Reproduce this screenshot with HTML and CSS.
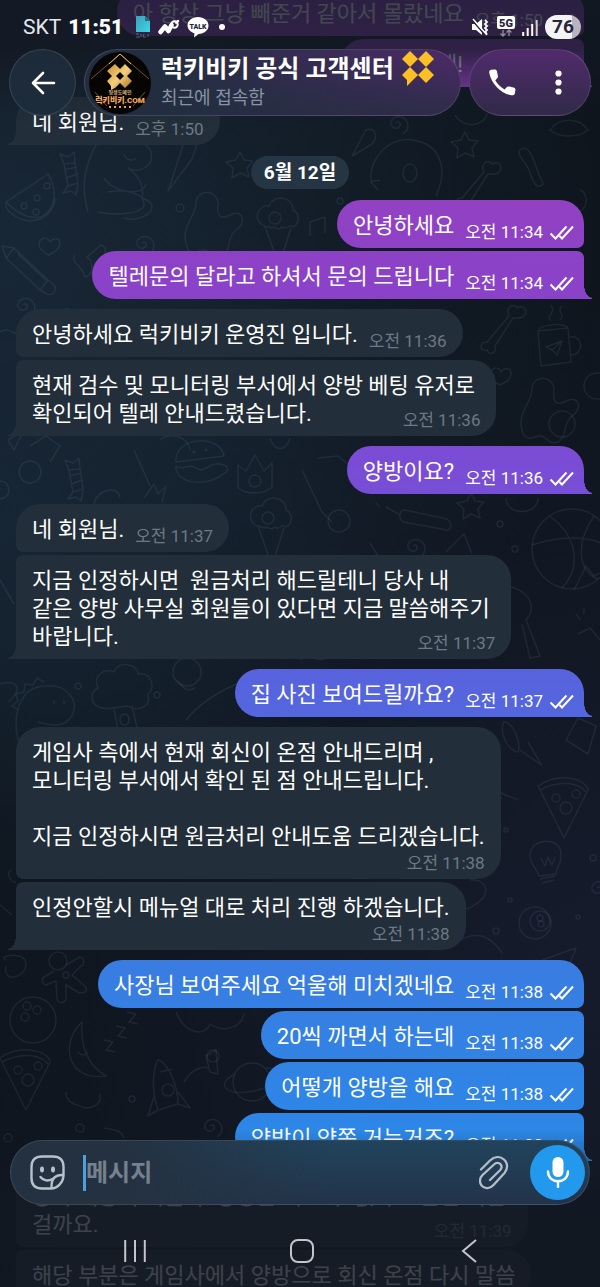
FILE: index.html
```html
<!DOCTYPE html>
<html lang="ko">
<head>
<meta charset="utf-8">
<meta name="viewport" content="width=device-width, initial-scale=1">
<title>럭키비키 공식 고객센터</title>
<link rel="stylesheet" href="styles.css">
</head>
<body>
<div class="screen">
  <svg class="wallpaper" viewBox="0 0 600 1287" preserveAspectRatio="xMidYMin slice" aria-hidden="true">
    <defs>
      <g id="swirl"><path d="M0 0c3-3 6 1 3 4s-9 0-8-5 9-8 14-3 3 12-2 15"/></g>
      <g id="star"><path d="M0-13l4 8 9 1-6 7 2 9-9-4-8 5 1-10-7-6 10-2z"/></g>
      <g id="heart"><path d="M0 9c-8-4-12-9-9-14s9-3 10 1c3-5 10-4 10 1S7 6 0 9z"/></g>
      <g id="melon"><path d="M-26-2L16-30C34 0 10 34-26-2zM-26-2c-1 6 2 9 6 12 20 15 42 3 43-16"/><circle cx="-8" cy="2" r="3"/><circle cx="5" cy="-6" r="3"/><circle cx="4" cy="8" r="3"/><circle cx="15" cy="-18" r="3"/></g>
      <g id="pencil"><path d="M-26-22l12 2 34 32-8 10-34-32zM-14-20l-8 10M20 12l6 5c5 6-4 13-9 8l-5-3M-10-14l30 28"/></g>
      <g id="cone"><path d="M-12 4L2 44 14 6M-16 2c-8-8-1-20 8-18 4-12 24-10 24 4 8 4 6 14 0 17-5-4-6 4-11 0-5 5-6-2-11 1-4-3-6 0-10-4z"/><circle cx="-2" cy="-4" r="6"/></g>
      <g id="ghost"><path d="M-20 28c-10-24 8-30 8-48 2-14 22-12 22 2-2 14 4 16 14 10 12-4 14 10 4 16-10 8-4 20-14 26-10 4-12-8-20-6-6 2-8 4-14 0z"/></g>
      <g id="tree"><path d="M-10 18c-20 4-26-14-14-20-6-14 8-20 16-16 4-12 24-8 24 2 14-2 18 14 10 20 4 14-12 18-20 12zM-8 18l5 28M10 16l6 26M2 24c6 0 7 10 1 11s-7-9-1-11z"/></g>
      <g id="planet"><circle r="19"/><path d="M-17-8C-40 4-22 16 6 8S38-14 14-14"/></g>
      <g id="bulb"><path d="M-7 14c-2-8-10-12-9-22C-14-24 14-26 15-8c1 10-5 12-5 20zM-6 17l15-3M-4 21l12-3M-5-4l4 8 3-9 4 8 3-8"/></g>
      <g id="pizza"><path d="M-28-12c20-14 48-8 50 4L-2 40zM-26-8c18-10 38-8 46 2"/><circle cx="0" cy="10" r="6"/><circle cx="10" cy="-4" r="4"/><circle cx="-10" cy="0" r="4"/></g>
      <g id="man"><circle cx="-6" cy="-14" r="9"/><path d="M2-10l14-8c6 2 4 8 0 10L8 0l14 12c2 6-5 7-8 5L2 10v14c-3 6-9 4-9-1L-8 6l-10 4c-6-2-4-8 0-9l8-5"/><circle cx="2" cy="0" r="3"/></g>
      <g id="rocket"><path d="M-10 24c-8-24-4-44 0-50 10 2 20 26 20 44zM-10 24l-10 6 6-20M10 18l12 4-12-16M-8-14l12-3"/><circle cx="0" cy="4" r="6"/></g>
      <g id="cup"><path d="M-17-16l30-3 3 34-30 4zM-17-16c4-8 28-8 30-3M15-10c14-2 14 18 1 18M-9 0l16-6-5 14-5-5zM7-6L-3 3M-4-26c-6-6 6-8 0-16M5-27c6-6-4-8 2-14"/></g>
      <g id="moon"><path d="M6-30C-16-10-10 30 30 24 16 16 4 0 6-30zM2 0c4 4 7 4 10 0"/></g>
      <g id="burger"><path d="M-24 0c-2-26 44-28 48-6zM-24 4c8 6 12-4 20 2s14-6 24-4 8 6 6 8c-12 12-42 16-50-2z"/><circle cx="-6" cy="-10" r="1"/><circle cx="6" cy="-12" r="1"/></g>
      <g id="crown"><path d="M-17-10l8 6L0-20l9 16 8-8v24c-8 8-28 8-34 0z"/><circle cy="6" r="6"/></g>
      <g id="ball"><circle r="40"/><path d="M-22-33C8-10 8 20-10 39M-40-4C-10-14 20-14 40 0M22-33C0 0 10 24 26 30"/></g>
      <g id="bone"><path d="M-16 14l22-26c-4-8 4-14 8-8 8-4 12 4 6 9-4 2-7 1-10 1L-8 18c2 8-6 10-8 4-8 2-8-8 0-8z"/></g>
      <g id="dino"><path d="M-24 34c-10-30 0-60 26-60 20-2 34 14 26 30-8 12-20 10-34 6M10-12v4M20-12v4M-26-2l-6-4 6-5-2-7 8-2 1-8 8 1 4-7 7 4"/></g>
      <g id="cat"><path d="M-34 30c-10-34 2-52 6-64 8-12 32-14 38-4 20-6 26 18 12 24-6 4-12 2-16 0 14 10 16 20 14 30 24 8 0 26-18 20M-18-4C-8 12 22 14 24 2M-14 10c18-4 36 2 36 12s-28 12-46 8M2-28c2 6 8 8 12 4"/></g>
      <g id="candy"><path d="M-6-8l-4-10 8 3 6-5 1 11M-6-8l11-1 3 20-10 3zM-2 14l-5 7 8-2 5 4 2-11M-6-2l13-3M-4 6l12-4"/></g>
    </defs>
    <g class="doodles">
      <use href="#melon" x="32" y="204"/><use href="#candy" x="70" y="172"/><use href="#cat" x="122" y="182"/><path d="M192 118l-24 73 24-32 12-36"/>
      <use href="#star" x="240" y="165"/><use href="#heart" x="49" y="246"/><use href="#pencil" x="28" y="268"/><use href="#swirl" x="142" y="243"/>
      <path d="M75 255c-6 8 8 10 10 22 10-2 8-16 2-20l14-12c8 2 4 14-4 16"/>
      <use href="#ghost" x="208" y="222"/><use href="#cone" x="277" y="222"/><use href="#swirl" x="23" y="305"/><use href="#swirl" x="396" y="123"/>
      <path d="M62 314c6-14 10 4 18-4 16-2 12 8 22 4M0 332c10-6 14 4 22 2"/>
      <path d="M372 184c-6-20 14-48 40-44 30 4 36 30 24 56M378 190c-12-12-4-8 2-10"/><ellipse cx="410" cy="173" rx="7" ry="9"/><use href="#bone" x="478" y="184"/>
      <path d="M520 150c8-8 14 10 18 22s8 12 2 14-8-10-12-18-12-14-8-18M352 156l14-26c10-4 12 8 6 14z"/><use href="#star" x="465" y="145"/>
      <path d="M310 222v14M325 217v16M310 222l15-5M580 190c6 2 10 14 0 22M455 115c8 14 30 12 32-2M550 130c10-14 30-12 38 0-10 8-28 8-38 0z"/>
      <use href="#cup" x="555" y="347"/><use href="#bone" x="503" y="328"/><use href="#ghost" x="544" y="408"/><use href="#heart" x="500" y="376"/><circle cx="562" cy="424" r="13"/><circle cx="597" cy="386" r="13"/>
      <path d="M8 440l16-10-10 20zM30 446l16-10 14 10-10 16M160 440c10-8 28-4 30 10M270 438c4 14 16 14 20 0"/>
      <circle cx="30" cy="472" r="11"/><use href="#candy" x="75" y="478"/><path d="M134 450l16 36M144 498l10-14 4 10 8-8-4 16"/><use href="#burger" x="200" y="462"/><use href="#crown" x="255" y="475"/><use href="#cone" x="270" y="522"/><circle cx="0" cy="490" r="9"/>
      <path d="M318 458l20-2 22 18M302 470l20 42 10 10M94 504c2-14 24-20 26-6"/><circle cx="339" cy="521" r="11"/><path d="M405 510l42 9c6 4 4 11 0 11l-44-8c-5-4-4-12 2-12zM400 515l-14-8M380 507l-4-4"/><use href="#star" x="471" y="506"/><path d="M506 498c0 18 32 18 32 0M446 552l18-18 8 20M370 543l10 16M0 580l14 24M508 586c20 4 30 20 18 34l14 36-10 2-8-34"/><use href="#swirl" x="413" y="546"/>
      <use href="#ball" x="572" y="549"/><path d="M574 590l12-24 8 10 8-4M578 634l12-6 12 14M576 614l4 6M584 608v6"/>
      <use href="#dino" x="44" y="712"/><use href="#tree" x="122" y="690"/><circle cx="187" cy="672" r="14"/><path d="M177 680c6 4 6 14 18 8M0 684c20-6 22 8 8 18M186 720c16-20 44-36 70-42M300 660c10-10 20 8 30-6"/>
      <path d="M504 722c10 0 18 24 14 30-8 0-20-18-14-30zM566 740l12-22 18 8-8 28zM520 750l20 14"/>
      <use href="#pizza" x="566" y="798"/><use href="#bulb" x="546" y="862"/><use href="#swirl" x="597" y="888"/><circle cx="535" cy="923" r="16"/><circle cx="540" cy="921" r="10"/><circle cx="540" cy="918" r="3"/><circle cx="541" cy="924" r="3"/><path d="M528 742l14 24M498 790c8 8 14 6 20 10M470 880c18-2 26 18-6 30"/>
      <path d="M6 960c-10-4 20-10 20 4s-24 20-20 2M12 870c-8 2 0 14 4 12M0 905l12 10M450 945c20-12 36-16 52 8M542 960l34-12-8 20"/>
      <use href="#man" x="64" y="975"/><circle cx="33" cy="1020" r="23"/><circle cx="27" cy="1006" r="4"/><circle cx="37" cy="1010" r="4"/><circle cx="25" cy="1017" r="4"/>
      <use href="#moon" x="76" y="1052"/><path d="M104 1040l9 2-7 8 9 2M116 1026l9 2-7 8 9 2M127 1012l9 2-7 8 9 2M176 1012c10 24 30 24 34 12 12 8 30 6 34-10"/>
      <use href="#pizza" x="28" y="1070"/><use href="#rocket" x="168" y="1086"/><path d="M184 1082c8-14 20-16 24-14M206 1056l10-6 2 24-8-2z"/><circle cx="213" cy="1056" r="6"/><use href="#planet" x="252" y="1082"/>
      <path d="M66 1092c0 14 14 12 18 16 14 0 18-8 16-14M104 1128c6 2 16 0 20 10"/><use href="#swirl" x="210" y="1126"/><circle cx="8" cy="1138" r="4"/><circle cx="80" cy="1128" r="4"/><circle cx="132" cy="1099" r="3"/><circle cx="180" cy="208" r="4"/><circle cx="340" cy="201" r="3"/><circle cx="500" cy="524" r="3"/><circle cx="515" cy="549" r="3"/><circle cx="78" cy="686" r="3"/><circle cx="157" cy="695" r="3"/><circle cx="506" cy="830" r="2"/><circle cx="593" cy="858" r="3"/><circle cx="510" cy="900" r="2"/><circle cx="578" cy="917" r="2"/><circle cx="496" cy="931" r="3"/>
    </g>
  </svg>

  <svg class="defs" aria-hidden="true"><symbol id="ticks" viewBox="0 0 25 15"><path d="M1.500 8.500l5 5L17.500 1.500M10.500 11l2.500 2.500L24 1.500" fill="none" stroke="currentColor" stroke-width="2"/></symbol></svg>

  <main class="chat">
    <section class="group">
      <article class="msg out first"><p>아 항상 그냥 빼준거 같아서 몰랐네요</p><footer><time>오후 1:50</time><svg class="ticks"><use href="#ticks"/></svg></footer></article>
      <article class="msg out last peek"><p>네!</p></article>
    </section>
    <section class="group">
      <article class="msg in single"><p>네 회원님.</p><footer><time>오후 1:50</time></footer></article>
    </section>
    <h2 class="date">6월 12일</h2>
    <section class="group">
      <article class="msg out first"><p>안녕하세요</p><footer><time>오전 11:34</time><svg class="ticks"><use href="#ticks"/></svg></footer></article>
      <article class="msg out last"><p>텔레문의 달라고 하셔서 문의 드립니다</p><footer><time>오전 11:34</time><svg class="ticks"><use href="#ticks"/></svg></footer></article>
    </section>
    <section class="group">
      <article class="msg in first"><p>안녕하세요 럭키비키 운영진 입니다.</p><footer><time>오전 11:36</time></footer></article>
      <article class="msg in last inset"><p>현재 검수 및 모니터링 부서에서 양방 베팅 유저로 <br>확인되어 텔레 안내드렸습니다.</p><footer><time>오전 11:36</time></footer></article>
    </section>
    <section class="group">
      <article class="msg out single"><p>양방이요?</p><footer><time>오전 11:36</time><svg class="ticks"><use href="#ticks"/></svg></footer></article>
    </section>
    <section class="group">
      <article class="msg in first"><p>네 회원님.</p><footer><time>오전 11:37</time></footer></article>
      <article class="msg in last inset"><p>지금 인정하시면  원금처리 해드릴테니 당사 내<br>같은 양방 사무실 회원들이 있다면 지금 말씀해주기 <br>바랍니다.</p><footer><time>오전 11:37</time></footer></article>
    </section>
    <section class="group">
      <article class="msg out single"><p>집 사진 보여드릴까요?</p><footer><time>오전 11:37</time><svg class="ticks"><use href="#ticks"/></svg></footer></article>
    </section>
    <section class="group">
      <article class="msg in first below"><p>게임사 측에서 현재 회신이 온점 안내드리며 ,<br>모니터링 부서에서 확인 된 점 안내드립니다.<br><br>지금 인정하시면 원금처리 안내도움 드리겠습니다.</p><footer><time>오전 11:38</time></footer></article>
      <article class="msg in last below"><p>인정안할시 메뉴얼 대로 처리 진행 하겠습니다.</p><footer><time>오전 11:38</time></footer></article>
    </section>
    <section class="group">
      <article class="msg out first"><p>사장님 보여주세요 억울해 미치겠네요</p><footer><time>오전 11:38</time><svg class="ticks"><use href="#ticks"/></svg></footer></article>
      <article class="msg out mid"><p>20씩 까면서 하는데</p><footer><time>오전 11:38</time><svg class="ticks"><use href="#ticks"/></svg></footer></article>
      <article class="msg out mid"><p>어떻개 양방을 해요</p><footer><time>오전 11:38</time><svg class="ticks"><use href="#ticks"/></svg></footer></article>
      <article class="msg out last"><p>양방이 양쪽 거는거죠?</p><footer><time>오전 11:38</time><svg class="ticks"><use href="#ticks"/></svg></footer></article>
    </section>
    <section class="group">
      <article class="msg in first inset"><p>당사 제공이 기를 수 상황은 어느 수 없다고 온점 이는 <br>걸까요.</p><footer><time>오전 11:39</time></footer></article>
      <article class="msg in mid"><p>해당 부분은 게임사에서 양방으로 회신 온점 다시 말씀</p></article>
    </section>
  </main>

  <div class="top">
    <div class="status">
      <span class="carrier">SKT</span>
      <span class="clock">11:51</span>
      <svg class="file" width="16" height="22" viewBox="0 0 16 22" aria-hidden="true"><defs><linearGradient id="teal" x1="0" y1="0" x2="1" y2="1"><stop offset="0" stop-color="#3a9fc0"/><stop offset="1" stop-color="#3fd6e2"/></linearGradient></defs><path d="M1 0h9l5 5v11H1z" fill="url(#teal)"/><path d="M10 0l5 5h-5z" fill="#1f6f8c"/><path d="M1 18h3M1 21h4M6 18v3M9 18l-1 3h3M13 18v3" stroke="#5a6674" fill="none"/></svg>
      <svg width="22" height="16" viewBox="0 0 22 16" aria-hidden="true"><path d="M2.500 13L7 7.500 10.500 12l3-6" fill="none" stroke="#fff" stroke-width="4.500" stroke-linecap="round" stroke-linejoin="round"/><circle cx="16.500" cy="5.500" r="3.200" fill="none" stroke="#fff" stroke-width="2"/><path d="M18 3.500l2-1.500" stroke="#fff" stroke-width="2.500" stroke-linecap="round"/></svg>
      <svg width="22" height="22" viewBox="0 0 22 22" aria-hidden="true"><path d="M11 1c6 0 10.500 3.600 10.500 8.500S17 18 11.500 18L7 21.500l.5-4C3.500 16 .5 13 .5 9.500.5 4.600 5 1 11 1z" fill="#fff"/><text x="11" y="12.500" text-anchor="middle" class="talk">TALK</text></svg>
      <span class="dot"></span>
      <svg class="mute" width="19" height="18" viewBox="0 0 19 18" aria-hidden="true"><path d="M1 6h4l6-5v16l-6-5H1z" fill="#fff"/><path d="M1 2l13 15" stroke="#2a1e3a" stroke-width="1.500"/><path d="M14 2l2 2-2 2 2 2-2 2 2 2-2 2 2 2" fill="none" stroke="#fff" stroke-width="1.800"/><path d="M2 1l14 16" stroke="#fff" stroke-width="1.500"/></svg>
      <svg width="18" height="22" viewBox="0 0 18 22" aria-hidden="true"><rect x="0" y="0" width="18" height="13" rx="2" fill="#fff"/><text x="9" y="10.500" text-anchor="middle" class="net">5G</text><path d="M6 14v6M3.500 17.500L6 20l2.500-2.500M12 20v-6M9.500 16.500L12 14l2.500 2.500" fill="none" stroke="#8d8a98" stroke-width="1.400"/></svg>
      <svg width="16" height="17" viewBox="0 0 16 17" aria-hidden="true"><path d="M1.200 13v4M5.700 9v8M10.200 5v12" stroke="#fff" stroke-width="2"/><path d="M14.700 1v16" stroke="#cfccd6" stroke-width="2"/></svg>
      <span class="battery">76</span>
    </div>
    <header class="bar">
      <button class="glass back" aria-label="뒤로"><svg width="26" height="24" viewBox="0 0 26 24"><path d="M13 2L3 12l10 10M3 12h21" fill="none" stroke="#fff" stroke-width="2.600" stroke-linecap="round" stroke-linejoin="round"/></svg></button>
      <div class="glass title">
        <svg class="avatar" viewBox="0 0 62 62" role="img" aria-label="럭키비키.COM">
          <defs><linearGradient id="gold" x1="0" y1="0" x2="1" y2="1"><stop offset="0" stop-color="#c98f2c"/><stop offset=".5" stop-color="#f5cf7c"/><stop offset="1" stop-color="#a86c16"/></linearGradient></defs>
          <circle cx="31" cy="31" r="31" fill="#070503"/>
          <path d="M2 27L31 2l29 25M6 40l12 14M56 40L44 54" fill="none" stroke="#7a5220" stroke-width="1"/>
          <path d="M20 12L31 2l11 10" fill="none" stroke="#e0b868" stroke-width="1"/>
          <path d="M26 12l5 5 5-5 7 7-5 5 5 5-7 7-5-5-5 5-4 2v-4l-4-5 5-5-5-5z" fill="url(#gold)"/><path d="M31 20l4 4-4 4-4-4z" fill="#070503"/>
          <text x="31" y="42" text-anchor="middle" class="logo-small">평생도메인</text>
          <text x="31" y="51" text-anchor="middle" class="logo-text">럭키비키.COM</text>
          <path d="M20 55h2M25 55h2M30 55h2M35 55h2M40 55h2" stroke="#e9a35a" stroke-width="2"/>
        </svg>
        <div class="who">
          <h1>럭키비키 공식 고객센터 <svg width="32" height="36" viewBox="0 0 32 36" aria-hidden="true"><path d="M8 0l8 8-8 8-8-8zM24 0l8 8-8 8-8-8zM24 16l8 8-8 8-8-8zM8 16l8 8-6 6-5 5v-6l-5-5z" fill="#fcbf25"/></svg></h1>
          <p>최근에 접속함</p>
        </div>
      </div>
      <div class="glass actions">
        <button aria-label="전화"><svg width="27" height="27" viewBox="0 0 27 27"><path d="M2 .800C0 1.500 0 3 .500 5c2 9.500 11 19 20.500 21 3 .600 4.500.300 5-2l.400-3c.1-1.600-.6-2.200-2-2.500l-4-.900c-1.300-.3-2 0-3 1l-1.800 1.800C11.500 18 8 14.500 6.300 11.200L8 9.400c1-1 1.100-1.600.8-2.900L8 2.600C7.600 1 7 .500 5.500.500z" fill="#fff"/></svg></button>
        <button aria-label="더보기"><svg width="7" height="25" viewBox="0 0 7 25"><g fill="#fff"><circle cx="3.500" cy="3.500" r="3.100"/><circle cx="3.500" cy="12.500" r="3.100"/><circle cx="3.500" cy="21.500" r="3.100"/></g></svg></button>
      </div>
    </header>
  </div>

  <div class="bottom">
    <form class="composer">
      <button type="button" class="icon" aria-label="스티커"><svg width="35" height="35" viewBox="0 0 35 35"><g fill="none" stroke="#b9c1ca" stroke-width="2.400" stroke-linecap="round" stroke-linejoin="round"><path d="M33.500 20V12C33.500 5 30 1.500 23 1.500H12C5 1.500 1.500 5 1.500 12v11c0 7 3.500 10.500 10.500 10.500h9c6 0 12.500-6 12.500-13.500-8-.5-12.500 3-12 13"/><path d="M10.500 22c3 4 8 4.500 12 2"/></g><ellipse cx="12" cy="14.500" rx="2" ry="3" fill="#b9c1ca"/><ellipse cx="23" cy="14.500" rx="2" ry="3" fill="#b9c1ca"/></svg></button>
      <span class="caret"></span>
      <input type="text" placeholder="메시지" aria-label="메시지">
      <button type="button" class="icon" aria-label="첨부"><svg width="30" height="34" viewBox="0 0 30 34"><path d="M2 13.500L11 4.500C15.500.500 21 0 25 3.500s4 9.500.500 13.500L14.500 29c-3.500 4-8.500 4-11.500 1s-2.500-8 .500-11L15 8.500c2-2 5-2 6.500-.200s1.300 4-.500 6L11 24" fill="none" stroke="#b4bec9" stroke-width="2.300" stroke-linecap="round"/></svg></button>
      <button type="button" class="mic" aria-label="음성 메시지"><svg width="24" height="31" viewBox="0 0 24 31"><rect x="6.500" y="0" width="11" height="20" rx="5.500" fill="#fff"/><path d="M2 14.500c0 13 20 13 20 0M12 24v6" fill="none" stroke="#fff" stroke-width="2.400" stroke-linecap="round"/></svg></button>
    </form>
    <nav class="nav">
      <button aria-label="최근 앱"><svg width="22" height="24" viewBox="0 0 22 24"><path d="M1.200 1v22M11 1v22M20.800 1v22" stroke="#c3c5ca" stroke-width="2"/></svg></button>
      <button aria-label="홈"><svg width="24" height="24" viewBox="0 0 24 24"><rect x="1" y="1" width="22" height="22" rx="7" fill="none" stroke="#c3c5ca" stroke-width="2"/></svg></button>
      <button aria-label="뒤로 가기"><svg width="16" height="24" viewBox="0 0 16 24"><path d="M15 1L2 12l13 11" fill="none" stroke="#c3c5ca" stroke-width="2"/></svg></button>
    </nav>
  </div>
</div>
</body>
</html>
```

FILE: styles.css
```css
* {
  box-sizing: border-box;
}

body {
  margin: 0;
  background: #0f161e;
  color: #fff;
  font-family: Roboto, "Noto Sans CJK KR", sans-serif;
}

h1, h2, p {
  margin: 0;
}

button {
  display: grid;
  place-items: center;
  padding: 0;
  border: 0;
  background: none;
}

svg {
  display: block;
  flex: none;
}

.defs {
  position: absolute;
  width: 0;
  height: 0;
}

.screen {
  position: relative;
  height: 100vh;
  overflow: hidden;
  background:
    radial-gradient(circle at 0 18%, #182736 0, transparent 50%),
    radial-gradient(circle at 0 40%, #152432 0, transparent 40%),
    radial-gradient(circle at 100% 75%, #151b2b 0, transparent 60%),
    #0e151d;
}

.wallpaper {
  position: absolute;
  inset: 0;
  width: 100%;
  height: 100%;
}

.doodles {
  fill: none;
  stroke: rgba(125, 155, 180, 0.12);
  stroke-width: 1.5;
  stroke-linejoin: round;
}

/* Message list */

.chat {
  position: relative;
  display: flex;
  flex-direction: column;
  gap: 10px;
  margin-top: -12px;
  padding: 0 16px;
}

.group {
  display: flex;
  flex-direction: column;
  gap: 3px;
}

.date {
  align-self: center;
  margin: 1px 0;
  padding: 0 13px;
  border-radius: 17px;
  background: #263543;
  font-size: 19px;
  font-weight: 700;
  line-height: 33px;
}

.msg {
  position: relative;
  display: flex;
  align-items: flex-end;
  gap: 11px;
  max-width: 100%;
  padding: 12px 16px 6px;
  border-radius: 24px;
}

.msg p {
  padding-bottom: 2px;
  font-size: 22px;
  line-height: 28px;
  white-space: break-spaces;
}

.msg footer {
  display: flex;
  align-items: center;
  gap: 6px;
  font-size: 17px;
  line-height: 20px;
  white-space: nowrap;
}

.in {
  align-self: flex-start;
  background: #222e39;
}

.in footer {
  color: #6d7985;
}

.out {
  align-self: flex-end;
  padding-right: 10px;
}

.out,
.out.last::after,
.out.single::after {
  background: linear-gradient(#9341c2 15%, #8a42c8 22%, #794dd6 37%, #5565de 54%, #387de2 76%, #2b88e6 89%) fixed;
}

.ticks {
  width: 25px;
  height: 15px;
}

.in.first {
  border-bottom-left-radius: 7px;
}

.in.mid {
  border-top-left-radius: 7px;
  border-bottom-left-radius: 7px;
}

.in.last {
  border-top-left-radius: 7px;
}

.in.last,
.in.single {
  border-bottom-left-radius: 0;
}

.out.first {
  border-bottom-right-radius: 7px;
}

.out.mid {
  border-top-right-radius: 7px;
  border-bottom-right-radius: 7px;
}

.out.last {
  border-top-right-radius: 7px;
}

.out.last,
.out.single {
  border-bottom-right-radius: 0;
}

.last::after,
.single::after {
  content: "";
  position: absolute;
  bottom: 0;
  width: 8px;
  height: 14px;
}

.in.last::after,
.in.single::after {
  right: 100%;
  background: #222e39;
  -webkit-mask: radial-gradient(8px 13px at 0 0, transparent 95%, #000);
  mask: radial-gradient(8px 13px at 0 0, transparent 95%, #000);
}

.out.last::after,
.out.single::after {
  left: 100%;
  -webkit-mask: radial-gradient(8px 13px at 100% 0, transparent 95%, #000);
  mask: radial-gradient(8px 13px at 100% 0, transparent 95%, #000);
}

.below {
  flex-direction: column;
  gap: 0;
}

.inset {
  display: grid;
}

.inset > * {
  grid-area: 1 / 1;
}

.inset footer {
  align-self: end;
  justify-self: end;
}

.peek {
  justify-content: flex-end;
  width: 244px;
  padding-right: 121px;
}

/* Status bar and chat header */

.top {
  position: absolute;
  inset: 0 0 auto;
  padding-bottom: 10px;
  background: linear-gradient(rgba(18, 24, 34, 0.8) 0, rgba(18, 24, 34, 0.78) 40%, rgba(18, 24, 34, 0.1) 85%, transparent);
}

.status {
  display: flex;
  align-items: center;
  gap: 7px;
  height: 49px;
  padding: 5px 19px 0 23px;
}

.carrier {
  color: #e6e8ec;
  font-size: 21px;
}

.clock {
  margin-right: 5px;
  font-size: 21px;
  font-weight: 900;
}

.talk {
  fill: #1d2735;
  font-size: 7px;
  font-weight: 900;
}

.dot {
  width: 6px;
  height: 6px;
  margin-left: 3px;
  border-radius: 50%;
  background: #fff;
}

.mute {
  margin-left: auto;
}

.net {
  fill: #2a1e3a;
  font-size: 11px;
  font-weight: 900;
}

.battery {
  width: 36px;
  border-radius: 12px;
  background: linear-gradient(90deg, #f4f3f6 74%, #b9b4c0 74%);
  color: #2a2438;
  font-size: 19px;
  font-weight: 700;
  line-height: 24px;
  text-align: center;
}

.bar {
  display: flex;
  gap: 8px;
  padding: 0 9px;
}

.glass {
  height: 67px;
  border: 1px solid rgba(255, 255, 255, 0.12);
  border-radius: 34px;
}

.back {
  width: 67px;
  background: linear-gradient(#1d2a3a, #1d2c3b);
}

.title {
  display: flex;
  flex: 1;
  align-items: center;
  gap: 10px;
  min-width: 0;
  padding-left: 4px;
  background:
    linear-gradient(90deg, #222e40 20%, transparent),
    linear-gradient(#4f2a6b, #2d2c47);
}

.avatar {
  width: 62px;
  height: 62px;
}

.logo-small {
  fill: #d9b27a;
  font-size: 5px;
  font-weight: 700;
}

.logo-text {
  fill: #f0a860;
  font-size: 8px;
  font-weight: 900;
}

.who {
  min-width: 0;
  white-space: nowrap;
}

.who h1 {
  display: flex;
  align-items: center;
  gap: 8px;
  height: 30px;
  font-size: 24px;
  font-weight: 700;
  line-height: 28px;
}

.who p {
  color: #8893a3;
  font-size: 18px;
  line-height: 28px;
}

.actions {
  display: grid;
  grid-template-columns: 1fr 1fr;
  width: 122px;
  padding: 0 4px;
  background: linear-gradient(#512b6c, #302a48);
}

/* Composer and system navigation */

.bottom {
  position: absolute;
  inset: auto 0 0;
  padding: 10px 10px 0;
  background: linear-gradient(transparent 0, rgba(18, 24, 34, 0.3) 20%, rgba(18, 24, 34, 0.82) 42%, rgba(18, 24, 34, 0.82));
}

.composer {
  display: flex;
  align-items: center;
  height: 65px;
  padding: 0 4px 0 19px;
  border: 1px solid rgba(255, 255, 255, 0.1);
  border-radius: 33px;
  background:
    linear-gradient(90deg, #243141 20%, rgba(36, 49, 65, 0) 55%),
    linear-gradient(#20445c, #233349);
}

.caret {
  width: 3px;
  height: 36px;
  margin-left: 18px;
  background: #4f9fdd;
}

.composer input {
  flex: 1;
  min-width: 0;
  padding: 0;
  border: 0;
  outline: 0;
  background: none;
  color: #fff;
  font: 700 24px Roboto, "Noto Sans CJK KR", sans-serif;
}

.composer input::placeholder {
  color: #76818e;
  opacity: 1;
}

.mic {
  width: 55px;
  height: 55px;
  margin-left: 21px;
  border-radius: 50%;
  background: #2399ee;
}

.nav {
  display: grid;
  grid-template-columns: 1fr 1fr 1fr;
  height: 82px;
  padding: 0 38px 0 42px;
}

.nav button {
  height: 92px;
}
```
